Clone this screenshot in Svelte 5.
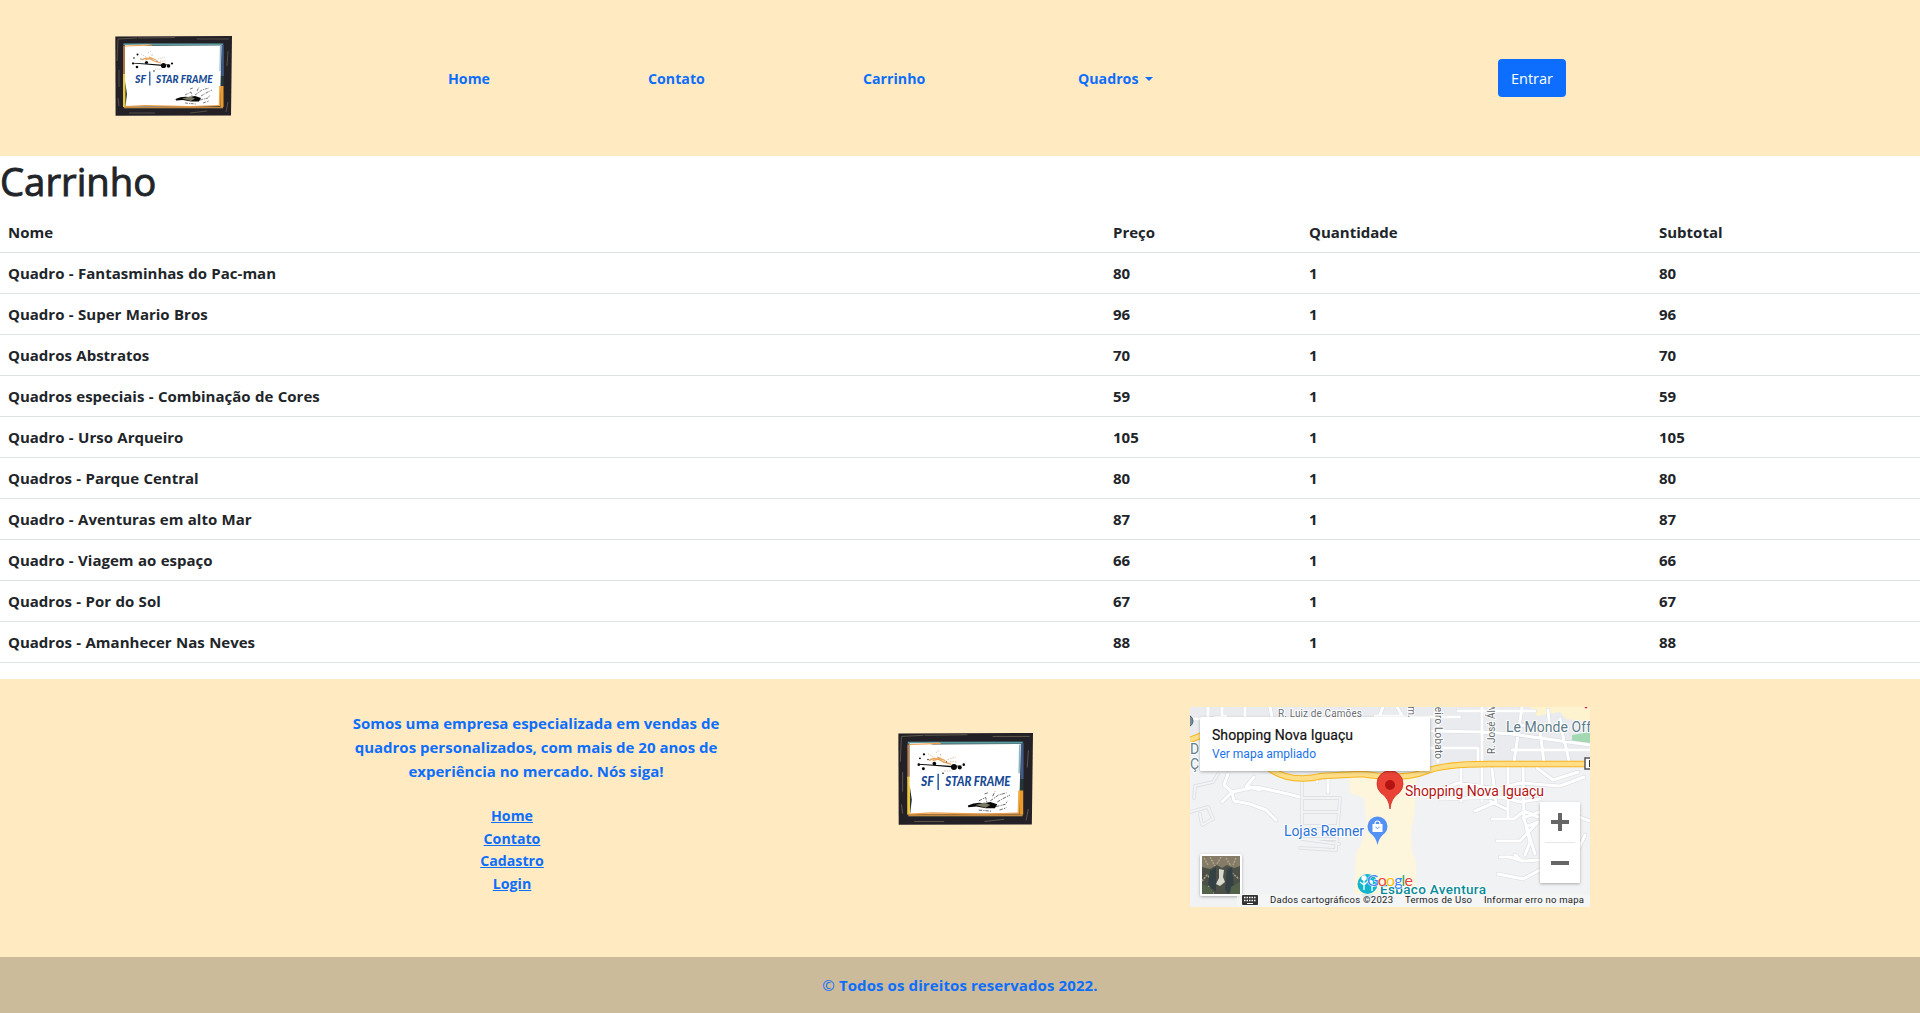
<script>
  const items = [
    ['Quadro - Fantasminhas do Pac-man', 80],
    ['Quadro - Super Mario Bros', 96],
    ['Quadros Abstratos', 70],
    ['Quadros especiais - Combinação de Cores', 59],
    ['Quadro - Urso Arqueiro', 105],
    ['Quadros - Parque Central', 80],
    ['Quadro - Aventuras em alto Mar', 87],
    ['Quadro - Viagem ao espaço', 66],
    ['Quadros - Por do Sol', 67],
    ['Quadros - Amanhecer Nas Neves', 88]
  ];
  const links = ['Home', 'Contato', 'Cadastro', 'Login'];
</script>

{#snippet logo()}
  <svg class="logo" viewBox="0 0 117 80" preserveAspectRatio="none" role="img" aria-label="SF Star Frame">
    <path d="M.3 .5L117 0 116 79.5.6 79.8z" fill="#242126" />
    <path d="M2 25L3 3 22 2M4 34V51M3 62L4 70M23 2L60 1.5M82 3L114 3M113 15L112 30M113 66L111 76M14 77H40M75 77L92 75" fill="none" stroke="#625a50" stroke-width=".8" />
    <path d="M8 7.5L109 7 108.5 72.5 8.5 73z" fill="#24383c" />
    <path d="M8.5 8.5H108" stroke="#609ba0" stroke-width="1.8" />
    <path d="M107.5 9V40" stroke="#435989" stroke-width="2.5" />
    <path d="M107 50V71" stroke="#ed9a2b" stroke-width="3" />
    <path d="M9 10V40" stroke="#bd7c43" stroke-width="1.8" />
    <path d="M9.2 38V71" stroke="#edc83d" stroke-width="2.4" />
    <path d="M9 71.5H108" stroke="#c9893e" stroke-width="1.6" />
    <path d="M10 9L36 8.5 28 10 106.5 9.5 105.5 48 104.5 70 10.5 70.5 12 58 10 45z" fill="#fff" />
    <path d="M10 10L37 9M10 70.5L30 69.5 75 70.5 105 69.5" fill="none" stroke="#ef9d47" stroke-width="1" />
    <path d="M105.5 10L105 35" stroke="#86b9c2" stroke-width="1.2" />
    <path d="M105 50L104.5 70" stroke="#f6aa42" stroke-width="1.6" />
    <path d="M27 24Q32 20 39 25L46 27M30 24L37 22M34 21L41 24" fill="none" stroke="#e9a45c" stroke-width="1.2" />
    <path d="M26 18L31 21M33 17L36 15M43 23L50 21M45 25L51 25M40 33L47 33" stroke="#b98b62" stroke-width=".5" stroke-dasharray="1.2 1" />
    <g fill="#080808">
      <path d="M17 26.8L31 27.6 48 28.7 56 28 48 30 31 28.5 18 27.6z" />
      <circle cx="22.5" cy="18.5" r="1" /><circle cx="19" cy="22" r=".8" />
      <circle cx="18" cy="27.5" r="1.1" /><circle cx="22" cy="31" r="1.3" />
      <circle cx="31.5" cy="26.5" r="1.6" /><circle cx="48.5" cy="29.5" r="2.6" />
      <circle cx="53.5" cy="30" r="1.8" /><circle cx="57" cy="27.5" r="1.1" />
      <circle cx="39" cy="35" r=".7" /><circle cx="42" cy="25" r=".5" />
      <circle cx="37" cy="19" r=".4" /><circle cx="26" cy="23" r=".6" />
      <path d="M60.5 63Q67 60 74 61L80 60 86 62 84 65.5 76 65.5 68 64 61 64.5z" />
    </g>
    <path d="M67 62.5L75 60.5 80 62.5 76 65z" fill="#77785f" />
    <path d="M70 59L76 56 77 60M80 59L87 54 94 52M86 60L91 57 97 54M85 64L93 62 95 59M70 67L81 68M88 67L94 65M82 55L84 51M75 53L78 52" fill="none" stroke="#292929" stroke-width=".6" stroke-dasharray="3 1 1 .7" />
    <g class="brand">
      <text x="20" y="46.5" textLength="11" lengthAdjust="spacingAndGlyphs">SF</text>
      <text x="41" y="46.5" textLength="56.5" lengthAdjust="spacingAndGlyphs">STAR FRAME</text>
    </g>
    <path d="M34.8 35.5V49.5" stroke="#174a94" stroke-width="1.2" />
  </svg>
{/snippet}

<header>
  <a class="home-logo" href="#home">{@render logo()}</a>
  <a href="#home">Home</a>
  <a href="#contato">Contato</a>
  <a href="#carrinho">Carrinho</a>
  <a href="#quadros">Quadros<span class="caret"></span></a>
  <button>Entrar</button>
</header>

<main>
  <h1>Carrinho</h1>
  <table>
    <colgroup><col class="c-name" /><col class="c-price" /><col class="c-qty" /><col /></colgroup>
    <thead>
      <tr><th>Nome</th><th>Preço</th><th>Quantidade</th><th>Subtotal</th></tr>
    </thead>
    <tbody>
      {#each items as [name, price]}
        <tr><td>{name}</td><td>{price}</td><td>1</td><td>{price}</td></tr>
      {/each}
    </tbody>
  </table>
</main>

<footer>
  <div class="info">
    <div class="about">
      <p><span>Somos uma empresa especializada em vendas de</span><br /><span>quadros personalizados, com mais de 20 anos de</span><br /><span>experiência no mercado. Nós siga!</span></p>
      <ul>
        {#each links as link}<li><a href="#{link}">{link}</a></li>{/each}
      </ul>
    </div>
    <div class="footer-logo">{@render logo()}</div>
    <svg class="map" viewBox="0 0 400 200" role="img" aria-label="Mapa">
      <defs>
        <filter id="shadow" x="-20%" y="-20%" width="140%" height="150%"><feDropShadow dx="0" dy="1" stdDeviation="1.8" flood-opacity=".3" /></filter>
        <clipPath id="above"><path d="M0 0H400V187H0z" /></clipPath>
      </defs>
      <path d="M0 0H400V200H0z" fill="#f0f2f4" />
      <path d="M0 0H400V58L258 58 200 68 120 74 60 64 0 30z" fill="#e9ebef" />
      <path d="M340 0H400V15L376 12 370 5 347 9z" fill="#fef3cf" />
      <path d="M382 28L400 25V36L382 34z" fill="#a3d9b2" />
      <path d="M159 70L226 71 225 105 221 126 222 144 226 156V187H164L166 146 177 125 174 91 160 86z" fill="#fdf5dc" />

      {#snippet streets()}
        <path d="M0 12H70M18 0V12L36 9M32 0V12M55 0V10M80 0L82 10M187 15L193 0M185 9H211M207 0L213 10H270M242 24L292 25 322 27 400 38M268 4H345M292 0V56M332 0L324 55M350 24L354 55M375 36L379 54M360 24L358 3M322 27L330 18 350 20M322 43H400M240 41H288V55M248 18V55M370 12L374 35" />
        <path d="M38 67L34 78 42 85 32 95M42 85L66 80 85 84 110 90M42 85L44 94 60 97 76 103 86 113M56 80L64 70M57 79L70 83M127 67V75M138 68V85" />
        <path d="M271 62V94M292 60V94M302 62L306 95M318 60V110M333 60L334 112 345 147M245 85L268 76 310 82 330 76 370 79 394 70M251 92L312 90 330 95 350 92M306 95L285 104M302 112H324L334 104 348 110M307 134H330L346 117M310 150H320L333 154 350 153M308 167L333 172 350 163M325 148L332 154M335 148L340 135 336 120 348 115M333 111L352 104 370 103 400 114M395 128L388 143 380 126M347 61L363 73 388 65M318 103L300 94" />
      {/snippet}
      {#snippet blocks()}
        <path d="M28 67L23 75 5 79 4 91M0 105L18 100 23 112 12 118 10 107M112 91V132L149 137M112 91H150L146 143 110 141M113 105H148M113 119H147M112 132H146M112 91V71" />
      {/snippet}
      <g class="road-edge">{@render streets()}</g>
      <g class="road">{@render streets()}</g>
      <g class="faint-edge">{@render blocks()}</g>
      <g class="faint-road">{@render blocks()}</g>
      <path d="M0 33L15 27M77 60Q100 77 132 69L172 67Q215 73 234 65Q252 57 300 57H395" fill="none" stroke="#f7b51c" stroke-width="6.5" />
      <path d="M0 33L15 27M77 60Q100 77 132 69L172 67Q215 73 234 65Q252 57 300 57H395" fill="none" stroke="#fddd86" stroke-width="4.5" />
      <path d="M395 51H402V62H395z" fill="white" stroke="#555" stroke-width="1.5" /><path d="M399.5 53V60M399 53.5H400M399 56.5H400" fill="none" stroke="#333" />
      <circle cx="-3" cy="14" r="6" fill="#758d9b" stroke="#50646f" />
      <circle cx="396" cy="0" r="1.4" fill="#d81b60" />

      <g class="halo">
        <text x="88" y="9.5" font-size="10" fill="#6b6e72" textLength="84">R. Luiz de Camões</text>
        <text x="316" y="25" font-size="14" fill="#5c7a87" textLength="85">Le Monde Off</text>
        <text x="-12" y="47" font-size="14" fill="#637e8c">SID</text>
        <text x="0" y="62" font-size="14" fill="#637e8c">Ç</text>
        <text transform="translate(218 -6) rotate(90)" font-size="10" fill="#66696c">em.</text>
        <text transform="translate(245 -6) rotate(90)" font-size="10" fill="#66696c" textLength="58">beiro Lobato</text>
        <text transform="translate(305 47) rotate(-90)" font-size="10" fill="#66696c" textLength="54">R. José Álva</text>
        <text x="215" y="89" font-size="14" fill="#b31412" textLength="139">Shopping Nova Iguaçu</text>
        <text x="94" y="129" font-size="14" fill="#2b72d9" textLength="80">Lojas Renner</text>
        <g clip-path="url(#above)"><text x="190" y="187" font-size="13.5" font-weight="500" fill="#078b98" textLength="106">Espaço Aventura</text></g>
      </g>

      <path d="M200 102Q199 91 191 86A13 13 0 1 1 209 86Q201 91 200 102z" fill="#ea4335" stroke="#c5221f" stroke-width=".7" />
      <circle cx="200" cy="78" r="5" fill="#b31412" />
      <path d="M187.5 138Q186 130 180 126A10 10 0 1 1 195 126Q189 130 187.5 138z" fill="#5491f5" />
      <path d="M182.5 117H192.5V125H182.5z" fill="#fff" /><path d="M185 117A2.5 3 0 0 1 190 117" fill="none" stroke="#fff" stroke-width="1.2" /><path d="M185.5 120Q187.5 123 189.5 120" fill="none" stroke="#5491f5" />
      <path d="M171 187Q174 190 177.5 194Q180 190 184 187z" fill="#9fd4d8" />
      <circle cx="177.5" cy="177" r="10" fill="#12b5cb" />
      <path d="M174 183V171M174 178L170 175M174 178L178 174M182 184V175M182 180L185 177" fill="none" stroke="white" stroke-width="1.3" /><circle cx="174" cy="171" r="2.7" fill="#fff" /><circle cx="181" cy="175" r="2" fill="#fff" />
      <text class="google" x="177" y="178.5" textLength="46"><tspan fill="#4285f4">G</tspan><tspan fill="#ea4335">o</tspan><tspan fill="#fbbc04">o</tspan><tspan fill="#4285f4">g</tspan><tspan fill="#34a853">l</tspan><tspan fill="#ea4335">e</tspan></text>

      <g filter="url(#shadow)"><rect x="10" y="10" width="230" height="54" rx="1.5" fill="#fff" /></g>
      <text x="22" y="33" font-size="14" fill="#111" stroke="#111" stroke-width=".2" textLength="141">Shopping Nova Iguaçu</text>
      <text x="22" y="51" font-size="12" fill="#1a73e8" textLength="104">Ver mapa ampliado</text>

      <g filter="url(#shadow)"><rect x="10" y="147" width="42" height="42" rx="2" fill="#fff" /></g>
      <path d="M12 149H50V187H12z" fill="#4b5147" />
      <path d="M12 149H50V159L44 161 37 158 32 161 27 158 20 162 12 160z" fill="#857c68" />
      <path d="M14 151L18 158M20 150L25 159M31 150L27 157M36 151L41 159M46 151L43 158M12 174L17 168 22 173 18 181 24 187M42 166L49 172M43 179L49 184" fill="none" stroke="#b0a184" stroke-width="1.5" stroke-dasharray="2 1" />
      <path d="M20 164L26 160V185L18 178zM37 163L42 160 44 180 38 187 35 182z" fill="#344144" />
      <path d="M29 162L34 163 33 170 35 175 30 179 26 177 29 171z" fill="#d7d8ce" />
      <path d="M12 177L19 180 24 187H12zM41 180L50 175V187H40z" fill="#53634a" />

      <g filter="url(#shadow)"><rect x="350" y="95" width="40" height="81" rx="1.5" fill="#fff" /></g>
      <path d="M355 135.5H385" stroke="#e6e6e6" />
      <path d="M361 115H379M370 106V124M361 156H379" stroke="#666" stroke-width="4" />

      <path d="M47 187H400V200H47z" fill="#f5f5f5" fill-opacity=".75" />
      <rect x="52" y="188" width="16" height="10" rx="1" fill="#333" />
      <path d="M54 190.5H66.5M54 193.5H66.5" stroke="white" stroke-width="1.5" stroke-dasharray="1.5 1" /><path d="M57 196.5H63" stroke="white" />
      <g font-size="9.5" fill="#222">
        <text x="80" y="196" textLength="123">Dados cartográficos ©2023</text>
        <text x="215" y="196" textLength="67">Termos de Uso</text>
        <text x="294" y="196" textLength="100">Informar erro no mapa</text>
      </g>
    </svg>
  </div>
  <div class="copyright"><span class="sign">©</span> Todos os direitos reservados 2022.</div>
</footer>

<style>
  :global(body) { margin: 0; background: #fff; color: #212529; font: 15px/1.5 'Open Sans', 'Noto Sans', sans-serif; }
  a { color: #0d6efd; }
  .logo { display: block; width: 100%; height: 100%; }
  .brand { fill: #174a94; font: italic 900 11px Lato, sans-serif; }
  header { box-sizing: border-box; height: 156px; background: #ffeac1; display: grid; grid-template-columns: 333px 200px 215px 215px 420px auto; align-items: center; justify-content: start; padding-left: 115px; }
  header > a { font-size: 14.2px; font-weight: 700; text-decoration: none; padding-top: 2px; }
  header > .home-logo { width: 117px; height: 80px; padding: 0; margin-bottom: 4px; }
  .caret { display: inline-block; margin-left: 7px; vertical-align: 3px; border-top: 4px solid; border-left: 4px solid transparent; border-right: 4px solid transparent; }
  button { box-sizing: border-box; width: 68px; height: 38px; padding: 0; border: 0; border-radius: 4px; background: #0d6efd; color: #fff; font: 14.5px 'Open Sans', sans-serif; }
  h1 { box-sizing: border-box; height: 48px; margin: 0 0 8px; padding-top: 1px; font-size: 38.3px; line-height: 48px; font-weight: 500; -webkit-text-stroke: .9px; }
  table { width: 100%; margin-bottom: 16px; table-layout: fixed; border-spacing: 0; }
  .c-name { width: 1105px; }
  .c-price { width: 196px; }
  .c-qty { width: 350px; }
  th, td { box-sizing: border-box; height: 41px; padding: 8px; line-height: 24px; text-align: left; font-weight: 700; border-bottom: 1px solid #dee2e6; }
  td { word-spacing: .5px; }
  footer { color: #0d6efd; background: #ffeac1; font-weight: 700; }
  .info { box-sizing: border-box; height: 278px; padding: 28px 0 0 336px; display: grid; grid-template-columns: 561.5px 292.5px 400px; align-items: start; }
  .about { width: 400px; text-align: center; padding-top: 4px; }
  p { margin: 0 0 22px; line-height: 24px; white-space: nowrap; }
  ul { list-style: none; margin: 0; width: 352px; padding: 0; font-size: 14.2px; line-height: 22.5px; }
  .footer-logo { width: 135px; height: 92px; margin-top: 26px; }
  .map { display: block; width: 400px; height: 200px; font-family: Roboto, sans-serif; font-weight: 400; overflow: hidden; }
  .road-edge, .road, .faint-edge, .faint-road { fill: none; stroke-linecap: round; stroke-linejoin: round; }
  .road-edge { stroke: #d9dce1; stroke-width: 4.2; }
  .road { stroke: #fff; stroke-width: 3; }
  .faint-edge { stroke: #dadce0; stroke-width: 3.5; }
  .faint-road { stroke: #f2f3f5; stroke-width: 2.2; }
  .halo { paint-order: stroke; stroke: #fff; stroke-width: 2px; stroke-linejoin: round; }
  .google { font: 16px Lato, sans-serif; stroke: #fff; stroke-width: 1px; paint-order: stroke; }
  .copyright { height: 56px; line-height: 56px; text-align: center; background: #cbbb9a; letter-spacing: .1px; }
  .sign { font-weight: 400; }
</style>
